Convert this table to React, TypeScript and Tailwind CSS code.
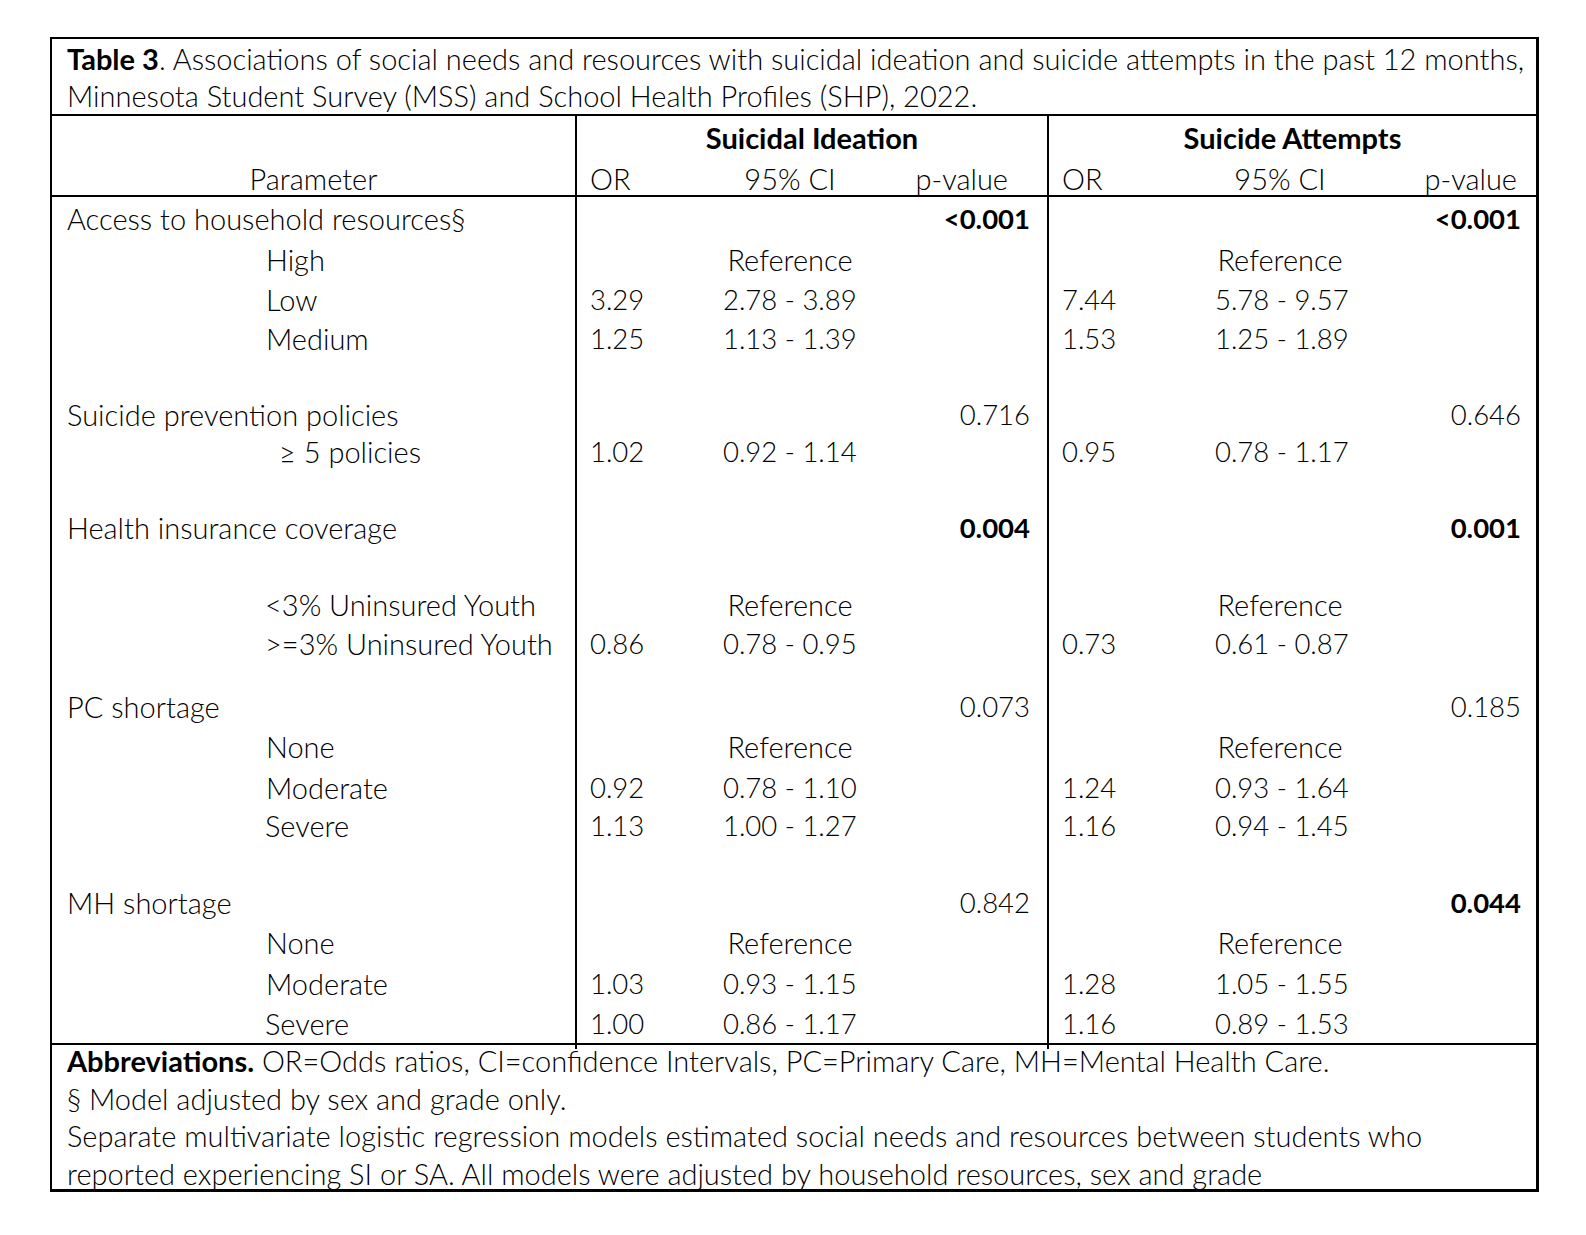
import React from 'react'

type Row = {
  h: string
  label?: string
  indent?: string
  siOr?: string
  siCi?: string
  siP?: string
  siBold?: boolean
  saOr?: string
  saCi?: string
  saP?: string
  saBold?: boolean
  ref?: boolean
}

// column grid shared by header and body rows
const GRID = 'grid grid-cols-[523px_125px_180px_167px_153px_160px_176px]'
const NUM = 'text-[27.5px]'

const ROWS: Row[] = [
  { h: 'h-[41px]', label: 'Access to household resources§', siP: '<0.001', siBold: true, saP: '<0.001', saBold: true },
  { h: 'h-[40px]', label: 'High', indent: 'pl-[214px]', ref: true },
  { h: 'h-[39px]', label: 'Low', indent: 'pl-[214px]', siOr: '3.29', siCi: '2.78 - 3.89', saOr: '7.44', saCi: '5.78 - 9.57' },
  { h: 'h-[34px]', label: 'Medium', indent: 'pl-[214px]', siOr: '1.25', siCi: '1.13 - 1.39', saOr: '1.53', saCi: '1.25 - 1.89' },
  { h: 'h-[42px]' },
  { h: 'h-[37px]', label: 'Suicide prevention policies', siP: '0.716', saP: '0.646' },
  { h: 'h-[38px]', label: '≥ 5 policies', indent: 'pl-[227px]', siOr: '1.02', siCi: '0.92 - 1.14', saOr: '0.95', saCi: '0.78 - 1.17' },
  { h: 'h-[38px]' },
  { h: 'h-[38px]', label: 'Health insurance coverage', siP: '0.004', siBold: true, saP: '0.001', saBold: true },
  { h: 'h-[39px]' },
  { h: 'h-[39px]', label: '<3% Uninsured Youth', indent: 'pl-[213px]', ref: true },
  { h: 'h-[40px]', label: '>=3% Uninsured Youth', indent: 'pl-[213px]', siOr: '0.86', siCi: '0.78 - 0.95', saOr: '0.73', saCi: '0.61 - 0.87' },
  { h: 'h-[23px]' },
  { h: 'h-[40px]', label: 'PC shortage', siP: '0.073', saP: '0.185' },
  { h: 'h-[41px]', label: 'None', indent: 'pl-[214px]', ref: true },
  { h: 'h-[38px]', label: 'Moderate', indent: 'pl-[214px]', siOr: '0.92', siCi: '0.78 - 1.10', saOr: '1.24', saCi: '0.93 - 1.64' },
  { h: 'h-[39px]', label: 'Severe', indent: 'pl-[213px]', siOr: '1.13', siCi: '1.00 - 1.27', saOr: '1.16', saCi: '0.94 - 1.45' },
  { h: 'h-[38px]' },
  { h: 'h-[40px]', label: 'MH shortage', siP: '0.842', saP: '0.044', saBold: true },
  { h: 'h-[41px]', label: 'None', indent: 'pl-[214px]', ref: true },
  { h: 'h-[40px]', label: 'Moderate', indent: 'pl-[214px]', siOr: '1.03', siCi: '0.93 - 1.15', saOr: '1.28', saCi: '1.05 - 1.55' },
  { h: 'h-[41px]', label: 'Severe', indent: 'pl-[213px]', siOr: '1.00', siCi: '0.86 - 1.17', saOr: '1.16', saCi: '0.89 - 1.53' },
]

const BodyRow = ({ row }: { row: Row }) => (
  <div className={`${GRID} ${row.h}`}>
    <div className={`flex items-center whitespace-nowrap pb-[3px] ${row.indent ?? 'pl-[15px]'}`}>{row.label}</div>

    {/* Suicidal Ideation */}
    <div className={`flex items-center border-l-2 border-black pl-[13px] pb-[3px] ${NUM}`}>{row.siOr}</div>
    {row.ref ? (
      <div className="flex items-center justify-center pb-[3px]">Reference</div>
    ) : (
      <div className={`flex items-center whitespace-nowrap pl-[23px] pb-[3px] ${NUM}`}>{row.siCi}</div>
    )}
    <div className={`flex items-center justify-end pr-[17px] pb-[3px] ${NUM} ${row.siBold ? 'font-bold' : ''}`}>{row.siP}</div>

    {/* Suicide Attempts */}
    <div className={`flex items-center border-l-2 border-black pl-[13px] pb-[3px] ${NUM}`}>{row.saOr}</div>
    {row.ref ? (
      <div className="flex items-center justify-center pb-[3px]">Reference</div>
    ) : (
      <div className={`flex items-center whitespace-nowrap pl-[15px] pb-[3px] ${NUM}`}>{row.saCi}</div>
    )}
    <div className={`flex items-center justify-end pr-[15px] pb-[3px] ${NUM} ${row.saBold ? 'font-bold' : ''}`}>{row.saP}</div>
  </div>
)

export default function App() {
  return (
    <div className="min-h-[1235px] w-full bg-white pl-[50px] pt-[37px] font-['Lato',sans-serif] text-[29px] font-light text-black">
      <div className="w-[1489px] border-t-2 border-l-2 border-r-[3px] border-b-[3px] border-black">
        {/* Title */}
        <div className="h-[77px] border-b-2 border-black pl-[15px] pt-px leading-[37px]">
          <span className="font-bold">Table 3</span>. Associations of social needs and resources with suicidal ideation and suicide attempts in the past 12 months,
          <br />
          Minnesota Student Survey (MSS) and School Health Profiles (SHP), 2022.
        </div>

        {/* Column headers */}
        <div className="border-b-2 border-black">
          <div className={`${GRID} h-[41px]`}>
            <div />
            <div className="col-span-3 flex items-end justify-center border-l-2 border-black pb-[4px] font-bold">
              Suicidal Ideation
            </div>
            <div className="col-span-3 flex items-end justify-center border-l-2 border-black pb-[4px] font-bold">
              Suicide Attempts
            </div>
          </div>
          <div className={`${GRID} h-[38px]`}>
            <div className="flex items-center justify-center pb-[6px]">Parameter</div>
            <div className="flex items-center border-l-2 border-black pl-[13px] pb-[6px]">OR</div>
            <div className="flex items-center justify-center pb-[6px]">95% CI</div>
            <div className="flex items-center justify-end pr-[39px] pb-[6px]">p-value</div>
            <div className="flex items-center border-l-2 border-black pl-[13px] pb-[6px]">OR</div>
            <div className="flex items-center justify-center pb-[6px]">95% CI</div>
            <div className="flex items-center justify-end pr-[19px] pb-[6px]">p-value</div>
          </div>
        </div>

        {/* Body */}
        <div className="border-b-2 border-black">
          {ROWS.map((row, i) => (
            <BodyRow key={i} row={row} />
          ))}
        </div>

        {/* Footnotes */}
        <div className="h-[147px] pl-[15px] leading-[37.5px]">
          <div className="-mt-[3px]">
            <p>
              <span className="font-bold">Abbreviations.</span> OR=Odds ratios, CI=confidence Intervals, PC=Primary Care, MH=Mental Health Care.
            </p>
            <p>§ Model adjusted by sex and grade only.</p>
            <p>
              Separate multivariate logistic regression models estimated social needs and resources between students who
              <br />
              reported experiencing SI or SA. All models were adjusted by household resources, sex and grade
            </p>
          </div>
        </div>
      </div>
    </div>
  )
}
